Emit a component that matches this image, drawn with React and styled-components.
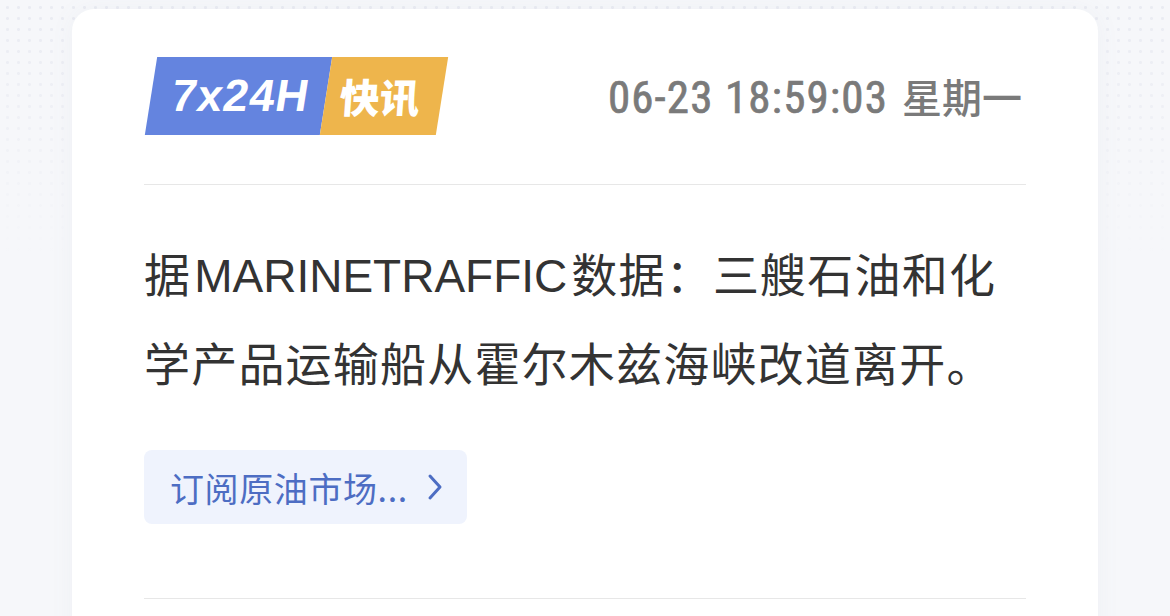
import React from 'react';
import styled, { createGlobalStyle } from 'styled-components';

const GlobalStyle = createGlobalStyle`
    html, body {
        margin: 0;
        padding: 0;
        background: #f6f7fa;
    }
    body {
        font-family: "Noto Sans CJK SC", "Noto Sans", sans-serif;
    }
`

const Page = styled.div`
    position: relative;
    width: 1170px;
    height: 616px;
    overflow: hidden;
    box-sizing: border-box;
    padding: 9px 72px 0;
    background-color: #f6f7fa;
    background-image:
        linear-gradient(180deg, rgba(246, 247, 250, 0) 0%, rgba(246, 247, 250, 1) 260px),
        radial-gradient(circle, #e9ebf2 1.3px, transparent 1.6px);
    background-size: 100% 100%, 11px 11px;
    background-position: 0 0, 2px 2px;
`

const Card = styled.section`
    position: relative;
    background: #ffffff;
    border-radius: 22px 22px 0 0;
    padding: 0 72px;
    height: 640px;
    box-shadow: 0 0 24px rgba(120, 130, 160, 0.06);
`

const Header = styled.header`
    display: flex;
    align-items: center;
    justify-content: space-between;
    padding: 48px 0 49px;
    border-bottom: 1px solid #e7e7e7;
`

const Badge = styled.div`
    display: flex;
    height: 78px;
    margin-left: 7px;
`

const BadgePart = styled.div`
    display: flex;
    align-items: center;
    justify-content: center;
    height: 100%;
    width: ${props => props.$width}px;
    background: ${props => props.$color};
    transform: skewX(-9deg);
    color: #fff;
    font-weight: 700;
`

const BadgeLatin = styled.span`
    font-family: "Liberation Sans", Arial, sans-serif;
    font-size: 45px;
    letter-spacing: 1px;
    margin-left: 4px;
`

const BadgeCjk = styled.span`
    font-family: "Noto Sans CJK SC", sans-serif;
    font-size: 40px;
    font-weight: 900;
    margin-left: -8px;
    transform: skewX(5deg);
`

const DateLine = styled.div`
    display: flex;
    align-items: baseline;
    color: #7a7a7a;
    margin-right: 4px;
`

const Clock = styled.span`
    font-family: "Liberation Sans Narrow", "Roboto Condensed", "DejaVu Sans Condensed", sans-serif;
    font-stretch: condensed;
    font-weight: 400;
    font-size: 45px;
    letter-spacing: 1.1px;
    -webkit-text-stroke: 0.7px #7a7a7a;
    margin-right: 14px;
`

const Weekday = styled.span`
    font-family: "Noto Sans CJK SC", sans-serif;
    font-size: 40px;
    font-weight: 500;
`

const Body = styled.div`
    padding-top: 45px;
`

const Text = styled.p`
    margin: 0;
    font-size: 46px;
    line-height: 85px;
    letter-spacing: 1.2px;
    color: #333333;
`

const Latin = styled.span`
    font-family: "Liberation Sans", Arial, sans-serif;
    letter-spacing: 0;
    margin: 0 4px 0 3px;
`

const Subscribe = styled.button`
    display: inline-flex;
    align-items: center;
    gap: 19px;
    margin-top: 46px;
    height: 74px;
    padding: 0 24px 0 26px;
    border: none;
    border-radius: 8px;
    background: #eff3fd;
    color: #4d6dc3;
    font-family: "Noto Sans CJK SC", sans-serif;
    font-size: 34px;
    letter-spacing: 0.6px;
    cursor: pointer;
`

const Divider = styled.div`
    margin-top: 74px;
    border-top: 1px solid #e7e7e7;
`

const Chevron = () => (
    <svg width="16" height="28" viewBox="0 0 16 28" fill="none">
        <path d="M3 3 L13 14 L3 25" stroke="#4d6dc3" strokeWidth="3" strokeLinecap="round" strokeLinejoin="round" />
    </svg>
)

const App = () => {
    return (
        <Page>
            <GlobalStyle />
            <Card>
                <Header>
                    <Badge>
                        <BadgePart $color="#6484df" $width={175}>
                            <BadgeLatin>7x24H</BadgeLatin>
                        </BadgePart>
                        <BadgePart $color="#eeb54c" $width={116}>
                            <BadgeCjk>快讯</BadgeCjk>
                        </BadgePart>
                    </Badge>
                    <DateLine>
                        <Clock>06-23 18:59:03</Clock>
                        <Weekday>星期一</Weekday>
                    </DateLine>
                </Header>
                <Body>
                    <Text>
                        据<Latin>MARINETRAFFIC</Latin>数据：三艘石油和化学产品运输船从霍尔木兹海峡改道离开。
                    </Text>
                    <Subscribe>
                        <span>订阅原油市场...</span>
                        <Chevron />
                    </Subscribe>
                    <Divider />
                </Body>
            </Card>
        </Page>
    );
}

export default App;
